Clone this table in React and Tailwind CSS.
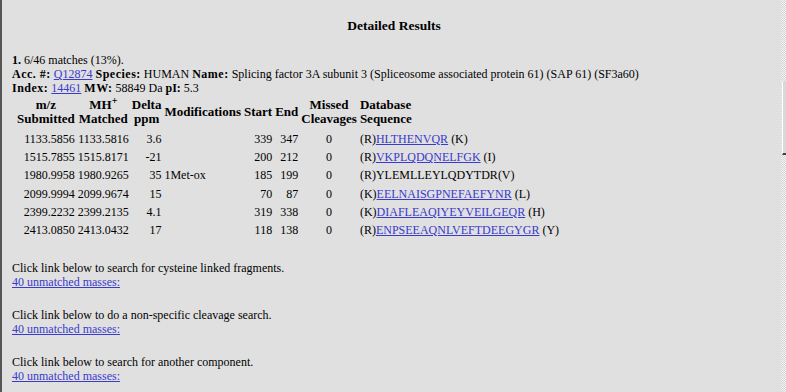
import React from 'react';

const rows = [
  { mz: '1133.5856', mh: '1133.5816', ppm: '3.6', mod: '', start: '339', end: '347', missed: '0', pre: '(R)', seq: 'HLTHENVQR', post: ' (K)', link: true },
  { mz: '1515.7855', mh: '1515.8171', ppm: '-21', mod: '', start: '200', end: '212', missed: '0', pre: '(R)', seq: 'VKPLQDQNELFGK', post: ' (I)', link: true },
  { mz: '1980.9958', mh: '1980.9265', ppm: '35', mod: '1Met-ox', start: '185', end: '199', missed: '0', pre: '(R)', seq: 'YLEMLLEYLQDYTDR', post: '(V)', link: false },
  { mz: '2099.9994', mh: '2099.9674', ppm: '15', mod: '', start: '70', end: '87', missed: '0', pre: '(K)', seq: 'EELNAISGPNEFAEFYNR', post: ' (L)', link: true },
  { mz: '2399.2232', mh: '2399.2135', ppm: '4.1', mod: '', start: '319', end: '338', missed: '0', pre: '(K)', seq: 'DIAFLEAQIYEYVEILGEQR', post: ' (H)', link: true },
  { mz: '2413.0850', mh: '2413.0432', ppm: '17', mod: '', start: '118', end: '138', missed: '0', pre: '(R)', seq: 'ENPSEEAQNLVEFTDEEGYGR', post: ' (Y)', link: true },
];

const searches = [
  'Click link below to search for cysteine linked fragments.',
  'Click link below to do a non-specific cleavage search.',
  'Click link below to search for another component.',
];

function Link({ children }) {
  return <a href="#" className="text-[#3a3acc] underline">{children}</a>;
}

export default function App() {
  return (
    <div className="relative h-[392px] w-[786px] overflow-hidden border-l-2 border-[#555] bg-[#e0e0e0] text-[12px] leading-[14px] text-black" style={{ fontFamily: '"Liberation Serif", serif' }}>
      <h2 className="pt-[18px] text-center text-[13.5px] font-bold leading-[16px]">Detailed Results</h2>

      <div className="pl-[10px] pt-[19px]">
        <div><b>1.</b> 6/46 matches (13%).</div>
        <div>
          <b className="tracking-[0.5px]">Acc. #:</b> <Link>Q12874</Link> <b className="tracking-[0.5px]">Species:</b> HUMAN <b className="tracking-[0.5px]">Name:</b> Splicing factor 3A subunit 3 (Spliceosome associated protein 61) (SAP 61) (SF3a60)
        </div>
        <div>
          <b className="tracking-[0.5px]">Index:</b> <Link>14461</Link> <b className="tracking-[0.5px]">MW:</b> 58849 Da <b>pI:</b> 5.3
        </div>

        <table className="mt-[3px] ml-[2px] border-separate border-spacing-x-[3px] border-spacing-y-0">
          <thead>
            <tr className="text-[13px]">
              <th className="pb-[4px] text-center font-bold">m/z<br />Submitted</th>
              <th className="pb-[4px] text-center font-bold">MH<sup className="text-[10px]">+</sup><br />Matched</th>
              <th className="pb-[4px] text-center font-bold">Delta<br />ppm</th>
              <th className="pb-[4px] text-center font-bold">Modifications</th>
              <th className="pb-[4px] text-center font-bold">Start</th>
              <th className="pb-[4px] text-center font-bold">End</th>
              <th className="pb-[4px] text-center font-bold">Missed<br />Cleavages</th>
              <th className="pb-[4px] text-left font-bold">Database<br />Sequence</th>
            </tr>
          </thead>
          <tbody>
            {rows.map((r) => (
              <tr key={r.mz} className="h-[18.2px]">
                <td className="text-right">{r.mz}</td>
                <td className="text-right">{r.mh}</td>
                <td className="text-right">{r.ppm}</td>
                <td className="text-left">{r.mod}</td>
                <td className="text-right">{r.start}</td>
                <td className="text-right">{r.end}</td>
                <td className="text-center">{r.missed}</td>
                <td className="text-left">
                  {r.pre}
                  {r.link ? <Link>{r.seq}</Link> : r.seq}
                  {r.post}
                </td>
              </tr>
            ))}
          </tbody>
        </table>

        <div className="mt-[22px] flex flex-col gap-[19px]">
          {searches.map((s) => (
            <div key={s}>
              <div>{s}</div>
              <div><Link>40 unmatched masses:</Link></div>
            </div>
          ))}
        </div>
      </div>

      {/* window scrollbar strip */}
      <div className="absolute right-0 top-0 h-full w-[5px] bg-[repeating-conic-gradient(#d4d4d4_0_25%,#f4f4f4_0_50%)] bg-[length:2px_2px]" />
      <div className="absolute right-0 top-[81px] h-[74px] w-[4px] border-l border-white border-b-2 border-b-[#444] bg-[#d8d8d8]" />
    </div>
  );
}
